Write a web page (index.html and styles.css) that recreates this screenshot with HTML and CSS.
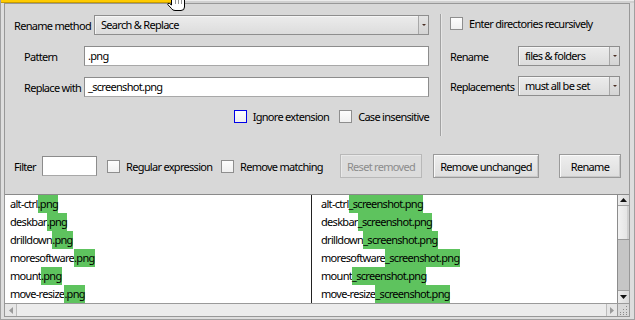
FILE: index.html
```html
<!DOCTYPE html>
<html lang="en">
  <head>
    <meta charset="UTF-8" />
    <title>Rename</title>
    <link rel="stylesheet" href="styles.css">
  </head>
  <body>
    <div class="window">
      <!-- frame top, the tab is cut off -->
      <div class="frame-top">
        <div class="tab"></div>
        <div class="frame-rest"></div>
      </div>

      <div class="client">
        <div class="panel">
          <div class="options">
            <div class="col-left">
              <div class="row">
                <span class="label lbl-method">Rename method</span>
                <div class="select select-wide"><span class="select-text">Search &amp; Replace</span><span class="select-btn"><i class="tri"></i></span></div>
              </div>
              <div class="row row-gap">
                <span class="label lbl-field">Pattern</span>
                <div class="input input-wide">.png</div>
              </div>
              <div class="row row-gap">
                <span class="label lbl-field">Replace with</span>
                <div class="input input-wide">_screenshot.png</div>
              </div>
              <div class="row row-checks">
                <label class="check"><span class="box focus"></span>Ignore extension</label>
                <label class="check check-case"><span class="box"></span>Case insensitive</label>
              </div>
            </div>

            <div class="divider"></div>

            <div class="col-right">
              <label class="check check-recursive"><span class="box"></span>Enter directories recursively</label>
              <div class="row row-rename">
                <span class="label lbl-right">Rename</span>
                <div class="select select-small"><span class="select-text">files &amp; folders</span><span class="select-btn"><i class="tri"></i></span></div>
              </div>
              <div class="row row-repl">
                <span class="label lbl-right">Replacements</span>
                <div class="select select-small"><span class="select-text">must all be set</span><span class="select-btn"><i class="tri"></i></span></div>
              </div>
            </div>
          </div>

          <div class="filter-row">
            <span class="label lbl-filter">Filter</span>
            <div class="input input-filter"></div>
            <label class="check check-regex"><span class="box"></span>Regular expression</label>
            <label class="check check-remove"><span class="box"></span>Remove matching</label>
            <button class="btn btn-reset" disabled>Reset removed</button>
            <button class="btn btn-unchanged">Remove unchanged</button>
            <button class="btn btn-rename">Rename</button>
          </div>
        </div>

        <!-- file lists -->
        <div class="lists">
          <div class="panes">
            <div class="pane pane-old">
              <div class="item">alt-ctrl<span class="hit">.png</span></div>
              <div class="item">deskbar<span class="hit">.png</span></div>
              <div class="item">drilldown<span class="hit">.png</span></div>
              <div class="item">moresoftware<span class="hit">.png</span></div>
              <div class="item">mount<span class="hit">.png</span></div>
              <div class="item">move-resize<span class="hit">.png</span></div>
            </div>
            <div class="pane pane-new">
              <div class="item">alt-ctrl<span class="hit">_screenshot.png</span></div>
              <div class="item">deskbar<span class="hit">_screenshot.png</span></div>
              <div class="item">drilldown<span class="hit">_screenshot.png</span></div>
              <div class="item">moresoftware<span class="hit">_screenshot.png</span></div>
              <div class="item">mount<span class="hit">_screenshot.png</span></div>
              <div class="item">move-resize<span class="hit">_screenshot.png</span></div>
            </div>
            <div class="vscroll">
              <div class="sbtn sbtn-up"><svg width="7" height="4" viewBox="0 0 7 4"><path d="M0 4 L3.5 0 L7 4 Z" fill="#111"/></svg></div>
              <div class="thumb"></div>
              <div class="track"></div>
              <div class="sbtn sbtn-down"><svg width="7" height="4" viewBox="0 0 7 4"><path d="M0 0 L3.5 4 L7 0 Z" fill="#111"/></svg></div>
            </div>
          </div>
          <div class="hbar">
            <div class="hscroll">
              <div class="hbtn hbtn-left"><svg width="4" height="7" viewBox="0 0 4 7"><path d="M4 0 L0 3.5 L4 7 Z" fill="#9a9a9a"/></svg></div>
              <div class="htrack"></div>
              <div class="hbtn hbtn-right"><svg width="4" height="7" viewBox="0 0 4 7"><path d="M0 0 L4 3.5 L0 7 Z" fill="#9a9a9a"/></svg></div>
            </div>
            <div class="corner">
              <svg width="11" height="12" viewBox="0 0 11 12">
                <g fill="#8a8a8a">
                  <rect x="8" y="2" width="1" height="1"/>
                  <rect x="5" y="5" width="1" height="1"/><rect x="8" y="5" width="1" height="1"/>
                  <rect x="2" y="8" width="1" height="1"/><rect x="5" y="8" width="1" height="1"/><rect x="8" y="8" width="1" height="1"/>
                  <rect x="2" y="10" width="1" height="1"/><rect x="5" y="10" width="1" height="1"/><rect x="8" y="10" width="1" height="1"/>
                </g>
              </svg>
            </div>
          </div>
        </div>
      </div>

      <!-- mouse pointer over the frame -->
      <svg class="cursor" width="20" height="11" viewBox="0 0 20 11">
        <path d="M5.5 -1 L5.5 5 L3.5 3.5 Q1.5 2.8 1.8 4.6 L5.5 8.5 Q6.5 10.5 9 10.5 L15 10.5 Q18.5 10.5 18.5 7 L18.5 -1" fill="#fff" stroke="#000"/>
        <path d="M9.5 0 V4 M12.5 0 V4 M15.5 0 V4" stroke="#777" stroke-width="0.8"/>
      </svg>
    </div>
  </body>
</html>
```

FILE: styles.css
```css
* {
  margin: 0;
  padding: 0;
  box-sizing: border-box;
}

body {
  font-family: "Noto Sans", "DejaVu Sans", sans-serif;
  font-size: 11px;
  letter-spacing: -0.7px;
  color: #000;
  background: #d8d8d8;
}

/* Window frame */
.window {
  position: relative;
  width: 635px;
  height: 320px;
  display: flex;
  flex-direction: column;
  background: #dedede;
  border-left: 1px solid #a0a0a0;
  border-right: 1px solid #a0a0a0;
  border-bottom: 1px solid #a0a0a0;
  padding: 0 4px 2px 3px;
  overflow: hidden;
}

.frame-top {
  height: 3px;
  display: flex;
  margin: 0 -4px 0 -4px;
}

.tab {
  width: 183px;
  background: #ffcb00;
  border-bottom: 1px solid #c79d00;
}

.frame-rest {
  flex: 1;
  background: #d0d0d0;
  border-top: 1px solid #ececec;
}

.client {
  flex: 1;
  display: flex;
  flex-direction: column;
  border: 1px solid #989898;
  background: #d8d8d8;
}

/* Top panel */
.panel {
  height: 190px;
  padding-top: 10px;
}

.options {
  height: 122px;
  display: flex;
}

.col-left {
  width: 424px;
  padding-top: 1px;
}

.divider {
  width: 2px;
  margin-left: 11px;
  border-left: 1px solid #a2a2a2;
  border-right: 1px solid #e6e6e6;
}

.col-right {
  width: 170px;
  margin-left: 8px;
  padding-top: 3px;
}

.row {
  display: flex;
  align-items: center;
  height: 20px;
}

.row-gap {
  margin-top: 11px;
}

.row-checks {
  margin-top: 12px;
  height: 15px;
  justify-content: flex-end;
}

.row-rename {
  margin-top: 16px;
}

.row-repl {
  margin-top: 10px;
}

.label {
  white-space: nowrap;
}

.lbl-method {
  width: 89px;
  padding-left: 9px;
}

.lbl-field {
  width: 79px;
  padding-left: 19px;
}

.lbl-right {
  width: 68px;
}

.lbl-filter {
  width: 37px;
  padding-left: 9px;
}

/* Menu fields */
.select {
  height: 20px;
  display: flex;
  border: 1px solid #8e8e8e;
  background: linear-gradient(#ececec, #dcdcdc);
  box-shadow: inset 1px 1px 0 #f6f6f6;
}

.select-wide {
  flex: 1;
  margin-right: 0;
}

.select-small {
  width: 102px;
}

.select-text {
  flex: 1;
  padding-left: 6px;
  line-height: 18px;
  white-space: nowrap;
}

.select-btn {
  width: 10px;
  border-left: 1px solid #a8a8a8;
  display: flex;
  align-items: center;
  justify-content: center;
  background: linear-gradient(#e4e4e4, #d4d4d4);
}

.tri {
  width: 0;
  height: 0;
  border-left: 2px solid transparent;
  border-right: 2px solid transparent;
  border-top: 2px solid #4a2e24;
}

/* Text fields */
.input {
  height: 20px;
  background: #fff;
  border: 1px solid #8c8c8c;
  border-bottom-color: #a8a8a8;
  padding-left: 3px;
  line-height: 18px;
  white-space: nowrap;
}

.input-wide {
  flex: 1;
}

.input-filter {
  width: 55px;
}

/* Check boxes */
.check {
  display: flex;
  align-items: center;
  white-space: nowrap;
}

.box {
  width: 13px;
  height: 13px;
  border: 1px solid #8e8e8e;
  background: linear-gradient(#fdfdfd, #f0f0f0);
  margin-right: 6px;
  flex-shrink: 0;
}

.box.focus {
  border-color: #0000e8;
}

.check-case {
  margin-left: 10px;
}

.check-recursive {
  height: 13px;
}

/* Filter row */
.filter-row {
  display: flex;
  align-items: center;
  height: 24px;
  margin-top: 18px;
}

.check-regex {
  width: 114px;
  margin-left: 10px;
}

.check-remove {
  width: 119px;
}

.btn {
  height: 24px;
  font: inherit;
  letter-spacing: inherit;
  color: #000;
  border: 1px solid #9a9a9a;
  background: linear-gradient(#eeeeee, #dedede);
  box-shadow: inset 1px 1px 0 #fafafa, inset -1px -1px 0 #c8c8c8;
  text-align: center;
}

.btn:disabled {
  color: #8c8c8c;
  border-color: #b8b8b8;
  background: #dcdcdc;
  box-shadow: inset 1px 1px 0 #e8e8e8;
}

.btn-reset {
  width: 82px;
}

.btn-unchanged {
  width: 106px;
  margin-left: 11px;
}

.btn-rename {
  width: 62px;
  margin-left: 20px;
}

/* Lists */
.lists {
  flex: 1;
  display: flex;
  flex-direction: column;
  border-top: 1px solid #8a8a8a;
}

.panes {
  height: 108px;
  display: flex;
  background: #fff;
}

.pane {
  overflow: hidden;
}

.pane-old {
  width: 307px;
  padding-left: 5px;
  border-right: 1px solid #222;
}

.pane-new {
  width: 305px;
  padding-left: 9px;
}

.item {
  height: 18px;
  line-height: 18px;
  white-space: nowrap;
}

.hit {
  display: inline-block;
  background: #5ec35e;
}

.vscroll {
  width: 12px;
  display: flex;
  flex-direction: column;
  border-left: 1px solid #8c8c8c;
  background: #c6c6c6;
}

.sbtn {
  height: 12px;
  display: flex;
  align-items: center;
  justify-content: center;
  background: linear-gradient(to right, #ececec, #dadada);
}

.sbtn-up {
  height: 11px;
  border-bottom: 1px solid #a0a0a0;
}

.sbtn-down {
  height: 13px;
  border-top: 1px solid #a0a0a0;
}

.thumb {
  height: 34px;
  background: linear-gradient(to right, #f2f2f2, #e2e2e2);
  border-bottom: 1px solid #9a9a9a;
  box-shadow: inset -2px 0 0 #d0d0d0;
}

.track {
  flex: 1;
}

.hbar {
  height: 13px;
  display: flex;
  border-top: 1px solid #9a9a9a;
}

.hscroll {
  flex: 1;
  display: flex;
  background: #ececec;
}

.hbtn {
  width: 12px;
  display: flex;
  align-items: center;
  justify-content: center;
  background: #e6e6e6;
}

.hbtn-left {
  border-right: 1px solid #bcbcbc;
}

.hbtn-right {
  width: 11px;
  border-left: 1px solid #bcbcbc;
}

.htrack {
  flex: 1;
}

.corner {
  width: 12px;
  border-left: 1px solid #9a9a9a;
  background: #d8d8d8;
}

.corner svg {
  display: block;
}

/* Pointer over the window */
.cursor {
  position: absolute;
  left: 165px;
  top: 0;
}
```
